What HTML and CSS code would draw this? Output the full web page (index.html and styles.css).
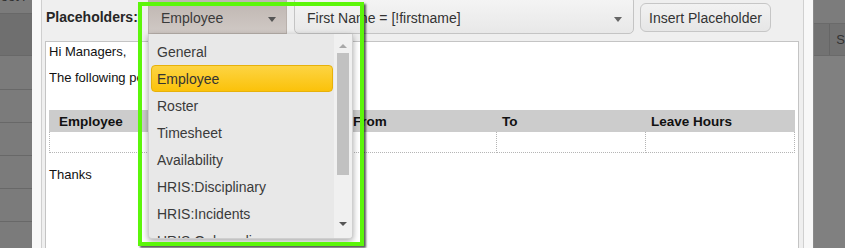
FILE: index.html
```html
<!DOCTYPE html>
<html>
<head>
<meta charset="utf-8">
<link rel="stylesheet" href="styles.css">
</head>
<body>
<div class="screen">
  <div class="side side-left">
    <div class="srow s0"><span class="cut">Boot r</span></div>
    <div class="srow s1"></div>
    <div class="srow s2"></div>
    <div class="srow s3"></div>
    <div class="srow s3"></div>
    <div class="srow s3"></div>
    <div class="srow s3"></div>
    <div class="srow s4"></div>
  </div>
  <div class="dialog">
    <div class="panel">
      <div class="toolbar">
        <span class="label">Placeholders:</span>
        <div class="select select-active"><span>Employee</span><i class="arrow"></i></div>
        <div class="select select-wide"><span>First Name = [!firstname]</span><i class="arrow"></i></div>
        <button class="btn">Insert Placeholder</button>
      </div>
      <div class="editor">
        <p class="line">Hi Managers,</p>
        <p class="line line-gap"><span class="clip">The following people have requested leave:</span></p>
        <table class="grid">
          <thead>
            <tr><th class="first">Employee</th><th>Type</th><th>From</th><th>To</th><th>Leave Hours</th></tr>
          </thead>
          <tbody>
            <tr><td></td><td></td><td></td><td></td><td></td></tr>
          </tbody>
        </table>
        <p class="line line-thanks">Thanks</p>
      </div>
    </div>
  </div>
  <div class="side side-right">
    <div class="rrow r0"></div>
    <div class="rrow r1"><div class="rcell"></div><div class="rcell rtext">S</div></div>
    <div class="rrow r2"></div>
  </div>

  <div class="menu">
    <ul class="items">
      <li class="item">General</li>
      <li class="item item-on">Employee</li>
      <li class="item">Roster</li>
      <li class="item">Timesheet</li>
      <li class="item">Availability</li>
      <li class="item">HRIS:Disciplinary</li>
      <li class="item">HRIS:Incidents</li>
      <li class="item">HRIS:Onboarding</li>
    </ul>
    <div class="scroll">
      <i class="up"></i>
      <div class="thumb"></div>
      <i class="down"></i>
    </div>
  </div>
  <div class="highlight"></div>
</div>
</body>
</html>
```
FILE: styles.css
```css
* { box-sizing: border-box; }
html, body { margin: 0; padding: 0; }
body {
  width: 845px;
  height: 248px;
  overflow: hidden;
  font-family: "Liberation Sans", Arial, sans-serif;
  background: #fff;
}
.screen {
  position: relative;
  width: 845px;
  height: 248px;
  display: flex;
  overflow: hidden;
}

/* left background list */
.side-left {
  width: 32px;
  background: #7b7b7b;
  display: flex;
  flex-direction: column;
}
.srow { border-bottom: 1px solid #686868; flex: none; overflow: hidden; }
.s0 { height: 14px; position: relative; }
.cut {
  display: block;
  font-size: 13px;
  color: #2f2f2f;
  line-height: 13px;
  margin-top: -10px;
  margin-left: -8px;
  white-space: nowrap;
}
.s1 { height: 42px; background: #6f6f6f; }
.s2 { height: 34px; }
.s3 { height: 33px; }
.s4 { height: 30px; border-bottom: 0; }

/* right background */
.side-right {
  width: 32px;
  background: #808080;
  border-left: 1px solid #8a8a8a;
  display: flex;
  flex-direction: column;
}
.rrow { flex: none; }
.r0 { height: 24px; border-bottom: 1px solid #6a6a6a; background: #7c7c7c; }
.r1 { height: 32px; border-bottom: 1px solid #6a6a6a; background: #727272; display: flex; }
.rcell { width: 18px; border-right: 1px solid #666; }
.rtext { border-right: 0; padding-left: 6px; font-size: 13px; color: #333; line-height: 31px; width: auto; }

/* dialog */
.dialog {
  width: 781px;
  background: #f8f8f8;
  padding: 0 9px 0 9px;
  display: flex;
}
.panel {
  flex: 1;
  background: #efefef;
  border-left: 1px solid #cfcfcf;
  border-right: 1px solid #d0d0d0;
  display: flex;
  flex-direction: column;
}
.toolbar {
  height: 41px;
  display: flex;
  align-items: flex-start;
  padding-left: 4px;
}
.label {
  font-weight: bold;
  font-size: 14px;
  color: #262626;
  width: 102px;
  line-height: 16px;
  margin-top: 9px;
}
.select {
  position: relative;
  height: 38px;
  margin-top: -4px;
  border: 1px solid #c4c4c4;
  border-radius: 5px;
  font-size: 14px;
  color: #333;
  line-height: 16px;
  padding: 13px 0 0 12px;
}
.select-active {
  width: 139px;
  background: linear-gradient(#bdb4af, #d0c9c5);
  border-color: #b9b1ac;
  border-radius: 0;
  color: #3a3a3a;
}
.select-wide {
  width: 340px;
  margin-left: 7px;
  background: linear-gradient(#f5f5f5, #e8e8e8);
}
.arrow {
  position: absolute;
  right: 10px;
  top: 20px;
  width: 0; height: 0;
  border-left: 4px solid transparent;
  border-right: 4px solid transparent;
  border-top: 5px solid #555;
}
.select-wide .arrow { right: 11px; border-top-color: #666; }
.btn {
  margin-left: 6px;
  margin-top: 3px;
  width: 131px;
  height: 29px;
  border: 1px solid #c6c6c6;
  border-radius: 6px;
  background: linear-gradient(#f2f2f2, #e6e6e6);
  font-family: "Liberation Sans", Arial, sans-serif;
  font-size: 14px;
  color: #333;
  padding: 0;
}

/* editor */
.editor {
  flex: 1;
  margin: 0 4px 0 3px;
  background: #fff;
  border: 1px solid #c4c4c4;
  border-bottom: 0;
  padding: 2px 2px 0 3px;
  font-size: 13px;
  color: #111;
}
.line { margin: 0 0 11px 0; line-height: 15px; white-space: nowrap; }
.clip { display: inline-block; max-width: 90px; overflow: hidden; vertical-align: top; }
.line-gap { margin-bottom: 25px; }
.line-thanks { margin-top: 14px; }
.grid {
  width: 746px;
  border-collapse: collapse;
  table-layout: fixed;
  border: 1px dotted #b5b5b5;
}
.grid th, .grid td {
  border: 1px dotted #b5b5b5;
  height: 21px;
  padding: 0 5px;
  text-align: left;
}
.grid th {
  background: #cccccc;
  border: 1px solid #cccccc;
  font-size: 13.5px;
  font-weight: bold;
  color: #111;
  line-height: 15px;
}
.grid th.first { padding-left: 9px; }

/* open dropdown */
.menu {
  position: absolute;
  left: 148px;
  top: 34px;
  width: 205px;
  height: 205px;
  background: #e8e8e8;
  border: 1px solid #cfcfcf;
  border-top: 0;
  border-radius: 0 0 4px 4px;
  box-shadow: 0 2px 6px rgba(0,0,0,0.35);
  overflow: hidden;
  display: flex;
}
.items {
  list-style: none;
  margin: 0;
  padding: 4px 0 0 2px;
  width: 185px;
}
.item {
  height: 27px;
  line-height: 26px;
  padding-left: 5px;
  font-size: 14px;
  color: #3a3a3a;
  border: 1px solid transparent;
  border-radius: 4px;
  width: 182px;
  white-space: nowrap;
}
.item-on {
  background: linear-gradient(#fdd443, #fbc20a);
  border-color: #e7b10a;
  color: #333;
}
.scroll {
  width: 18px;
  margin-left: 1px;
  background: #f0f0f0;
  display: flex;
  flex-direction: column;
  align-items: center;
  padding-top: 10px;
}
.up {
  width: 0; height: 0;
  border-left: 4px solid transparent;
  border-right: 4px solid transparent;
  border-bottom: 4px solid #a8a8a8;
}
.thumb {
  width: 12px;
  height: 122px;
  margin-top: 5px;
  background: #c1c1c1;
}
.down {
  margin-top: 47px;
  width: 0; height: 0;
  border-left: 4px solid transparent;
  border-right: 4px solid transparent;
  border-top: 4px solid #555;
}

/* annotation frame */
.highlight {
  position: absolute;
  left: 138px;
  top: 2px;
  width: 226px;
  height: 244px;
  border: 4px solid #5cf60a;
  box-shadow: 2px 2px 2px rgba(0,0,0,0.65);
}
```
